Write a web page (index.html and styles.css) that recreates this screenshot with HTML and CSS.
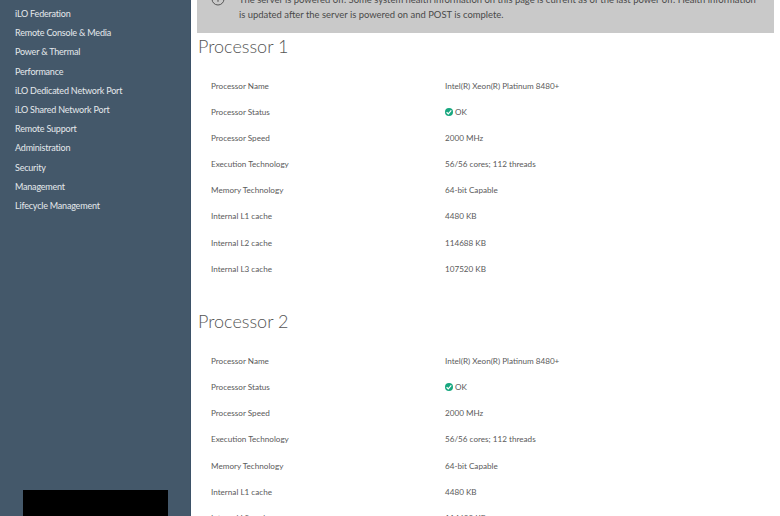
FILE: index.html
```html
<!DOCTYPE html>
<html lang="en">
<head>
  <meta charset="UTF-8">
  <title>iLO - Processors</title>
  <link rel="stylesheet" href="styles.css">
</head>
<body>
<div class="sidebar">
  <nav class="nav">
    <a href="#">iLO Federation</a>
    <a href="#">Remote Console &amp; Media</a>
    <a href="#">Power &amp; Thermal</a>
    <a href="#">Performance</a>
    <a href="#">iLO Dedicated Network Port</a>
    <a href="#">iLO Shared Network Port</a>
    <a href="#">Remote Support</a>
    <a href="#">Administration</a>
    <a href="#">Security</a>
    <a href="#">Management</a>
    <a href="#">Lifecycle Management</a>
  </nav>
  <div class="redacted"></div>
</div>

<div class="content">
  <div class="notice">
    <svg class="notice-icon" width="16" height="16" viewBox="0 0 16 16">
      <circle cx="8" cy="8" r="6" fill="none" stroke="#555" stroke-width="1"/>
      <path d="M8 7.2v3.6M8 5v1.2" stroke="#555" stroke-width="1.1" fill="none"/>
    </svg>
    <p>The server is powered off. Some system health information on this page is current as of the last power off. Health information is updated after the server is powered on and POST is complete.</p>
  </div>

  <h2>Processor 1</h2>
  <div class="table">
    <div class="row"><span>Processor Name</span><span>Intel(R) Xeon(R) Platinum 8480+</span></div>
    <div class="row"><span>Processor Status</span><span class="status"><i class="ok"><svg width="8" height="8" viewBox="0 0 8 8"><path d="M1.6 4.2l1.7 1.6 3-3.4" fill="none" stroke="#fff" stroke-width="1.2"/></svg></i>OK</span></div>
    <div class="row"><span>Processor Speed</span><span>2000 MHz</span></div>
    <div class="row"><span>Execution Technology</span><span>56/56 cores; 112 threads</span></div>
    <div class="row"><span>Memory Technology</span><span>64-bit Capable</span></div>
    <div class="row"><span>Internal L1 cache</span><span>4480 KB</span></div>
    <div class="row"><span>Internal L2 cache</span><span>114688 KB</span></div>
    <div class="row"><span>Internal L3 cache</span><span>107520 KB</span></div>
  </div>

  <h2>Processor 2</h2>
  <div class="table">
    <div class="row"><span>Processor Name</span><span>Intel(R) Xeon(R) Platinum 8480+</span></div>
    <div class="row"><span>Processor Status</span><span class="status"><i class="ok"><svg width="8" height="8" viewBox="0 0 8 8"><path d="M1.6 4.2l1.7 1.6 3-3.4" fill="none" stroke="#fff" stroke-width="1.2"/></svg></i>OK</span></div>
    <div class="row"><span>Processor Speed</span><span>2000 MHz</span></div>
    <div class="row"><span>Execution Technology</span><span>56/56 cores; 112 threads</span></div>
    <div class="row"><span>Memory Technology</span><span>64-bit Capable</span></div>
    <div class="row"><span>Internal L1 cache</span><span>4480 KB</span></div>
    <div class="row"><span>Internal L2 cache</span><span>114688 KB</span></div>
    <div class="row"><span>Internal L3 cache</span><span>107520 KB</span></div>
  </div>
</div>
</body>
</html>
```

FILE: styles.css
```css
* { box-sizing: border-box; }
html, body {
  height: 100%;
}
body {
  margin: 0;
  display: flex;
  overflow: hidden;
  font-family: 'Lato', sans-serif;
  background-color: #fff;
}
.sidebar {
  width: 191px;
  flex-shrink: 0;
  height: 100%;
  display: flex;
  flex-direction: column;
  align-items: center;
  background-color: #44586a;
  border-right: 1px solid #3d5268;
}
.nav {
  width: 100%;
  padding: 4px 0 0 15px;
}
.nav a {
  display: block;
  height: 19.2px;
  line-height: 19.2px;
  font-size: 9px;
  letter-spacing: -0.2px;
  color: #e4e9ec;
  text-decoration: none;
}
.redacted {
  width: 145px;
  height: 26px;
  margin-top: auto;
  background-color: #000;
}
.content {
  flex: 1;
  min-width: 0;
  padding: 0 6px;
  margin-top: -17px;
  color: #555;
}
.notice {
  height: 50px;
  display: flex;
  padding: 9px 10px 0 13px;
  background-color: #c9c9c9;
}
.notice-icon {
  flex-shrink: 0;
  margin-top: -1px;
  margin-right: 13px;
}
.notice p {
  margin: 0;
  font-size: 9.45px;
  line-height: 15px;
  color: #4a4a4a;
}
h2 {
  margin: 0 0 0 1px;
  height: 27px;
  line-height: 27px;
  font-size: 18px;
  font-weight: 300;
  color: #555;
}
.table {
  padding: 12.6px 0 26.6px 14px;
}
.row {
  display: flex;
  align-items: center;
  height: 26.15px;
  font-size: 8.15px;
  color: #5a5a5a;
}
.row span:first-child {
  width: 234px;
  flex-shrink: 0;
}
.status {
  display: flex;
  align-items: center;
}
.ok {
  width: 8px;
  height: 8px;
  margin-right: 2px;
  border-radius: 50%;
  background-color: #17a77f;
  display: flex;
}
```
